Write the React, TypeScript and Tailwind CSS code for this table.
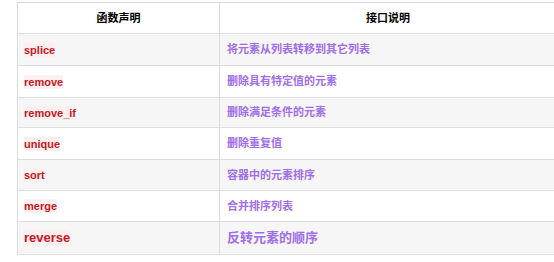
const rows = [
  { name: 'splice', desc: '将元素从列表转移到其它列表', h: 'h-[32px]', gray: true },
  { name: 'remove', desc: '删除具有特定值的元素', h: 'h-[32px]', gray: false },
  { name: 'remove_if', desc: '删除满足条件的元素', h: 'h-[30px]', gray: true },
  { name: 'unique', desc: '删除重复值', h: 'h-[32px]', gray: false },
  { name: 'sort', desc: '容器中的元素排序', h: 'h-[31px]', gray: true },
  { name: 'merge', desc: '合并排序列表', h: 'h-[31px]', gray: false },
];

const font = "font-['Liberation_Sans','Noto_Sans_CJK_SC',sans-serif]";

export default function App() {
  return (
    <div className={`w-[554px] h-[262px] overflow-hidden bg-white pt-[2px] pl-[17px] ${font}`}>
      <div className="w-[539px] border-t border-l border-[#dddddd]">
        {/* header */}
        <div className="flex h-[31px] border-b border-[#dddddd] bg-white text-[11px] font-bold text-black">
          <div className="w-[202px] shrink-0 border-r border-[#dddddd] flex items-center justify-center">函数声明</div>
          <div className="flex-1 flex items-center justify-center">接口说明</div>
        </div>

        {rows.map((r) => (
          <div
            key={r.name}
            className={`flex ${r.h} border-b border-[#dddddd] ${r.gray ? 'bg-[#f6f6f6]' : 'bg-white'}`}
          >
            <div className="w-[202px] shrink-0 border-r border-[#dddddd] flex items-center pl-[6px]">
              <code className={`${font} text-[11px] font-bold text-[#c7171e] bg-[#fcefef] leading-[14px]`}>{r.name}</code>
            </div>
            <div className="flex-1 flex items-center pl-[7px] text-[11px] font-bold text-[#a06ee8]">{r.desc}</div>
          </div>
        ))}

        {/* last row is set larger */}
        <div className="flex h-[33px] border-b border-[#dddddd] bg-[#f6f6f6]">
          <div className="w-[202px] shrink-0 border-r border-[#dddddd] flex items-center pl-[6px]">
            <code className={`${font} text-[13px] font-bold text-[#c7171e] bg-[#fcefef] leading-[16px]`}>reverse</code>
          </div>
          <div className="flex-1 flex items-center pl-[7px] text-[13px] font-bold text-[#a06ee8]">反转元素的顺序</div>
        </div>
      </div>
    </div>
  );
}
